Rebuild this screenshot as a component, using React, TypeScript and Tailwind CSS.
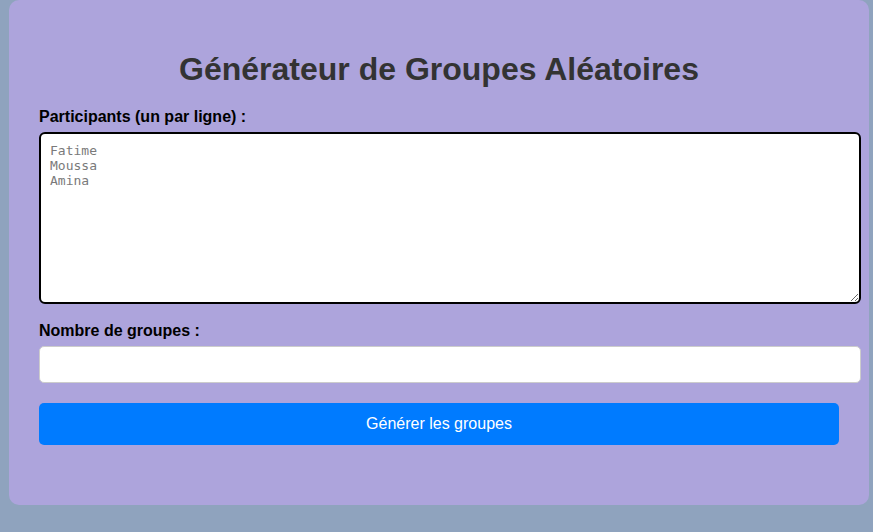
import { useState } from "react";

export default function App() {
  const [names, setNames] = useState("");
  const [count, setCount] = useState("");

  return (
    <div className="h-[532px] w-full overflow-hidden bg-[#8fa3be] font-['Liberation_Sans',Arial,sans-serif]">
      <div className="ml-[9px] flex h-[505px] w-[860px] flex-col rounded-[10px] bg-[#ada4dc] px-[30px] pt-[51px]">
        <h1 className="text-center text-[32px] leading-[37px] font-bold text-[#333333]">
          Générateur de Groupes Aléatoires
        </h1>

        <label htmlFor="participants" className="mt-[20px] block text-[16px] leading-[18px] font-bold text-black">
          Participants (un par ligne) :
        </label>
        <textarea
          id="participants"
          autoFocus
          value={names}
          onChange={(e) => setNames(e.target.value)}
          placeholder={"Fatime\nMoussa\nAmina"}
          className="mt-[6px] h-[172px] w-[822px] shrink-0 rounded-[6px] border-2 border-black bg-white pt-[9px] pl-[9px] font-['DejaVu_Sans_Mono',monospace] text-[13px] leading-[15px] text-black caret-black outline-none placeholder:text-[#7a7a7a]"
        />

        <label htmlFor="groups" className="mt-[18px] block text-[16px] leading-[18px] font-bold text-black">
          Nombre de groupes :
        </label>
        <input
          id="groups"
          type="number"
          value={count}
          onChange={(e) => setCount(e.target.value)}
          className="mt-[6px] h-[37px] w-[822px] shrink-0 rounded-[5px] border border-[#cccccc] bg-white px-[10px] text-[16px] outline-none"
        />

        <button
          type="button"
          className="mt-[20px] h-[42px] w-[800px] shrink-0 rounded-[5px] bg-[#007bff] text-[16px] text-white"
        >
          Générer les groupes
        </button>
      </div>
    </div>
  );
}
